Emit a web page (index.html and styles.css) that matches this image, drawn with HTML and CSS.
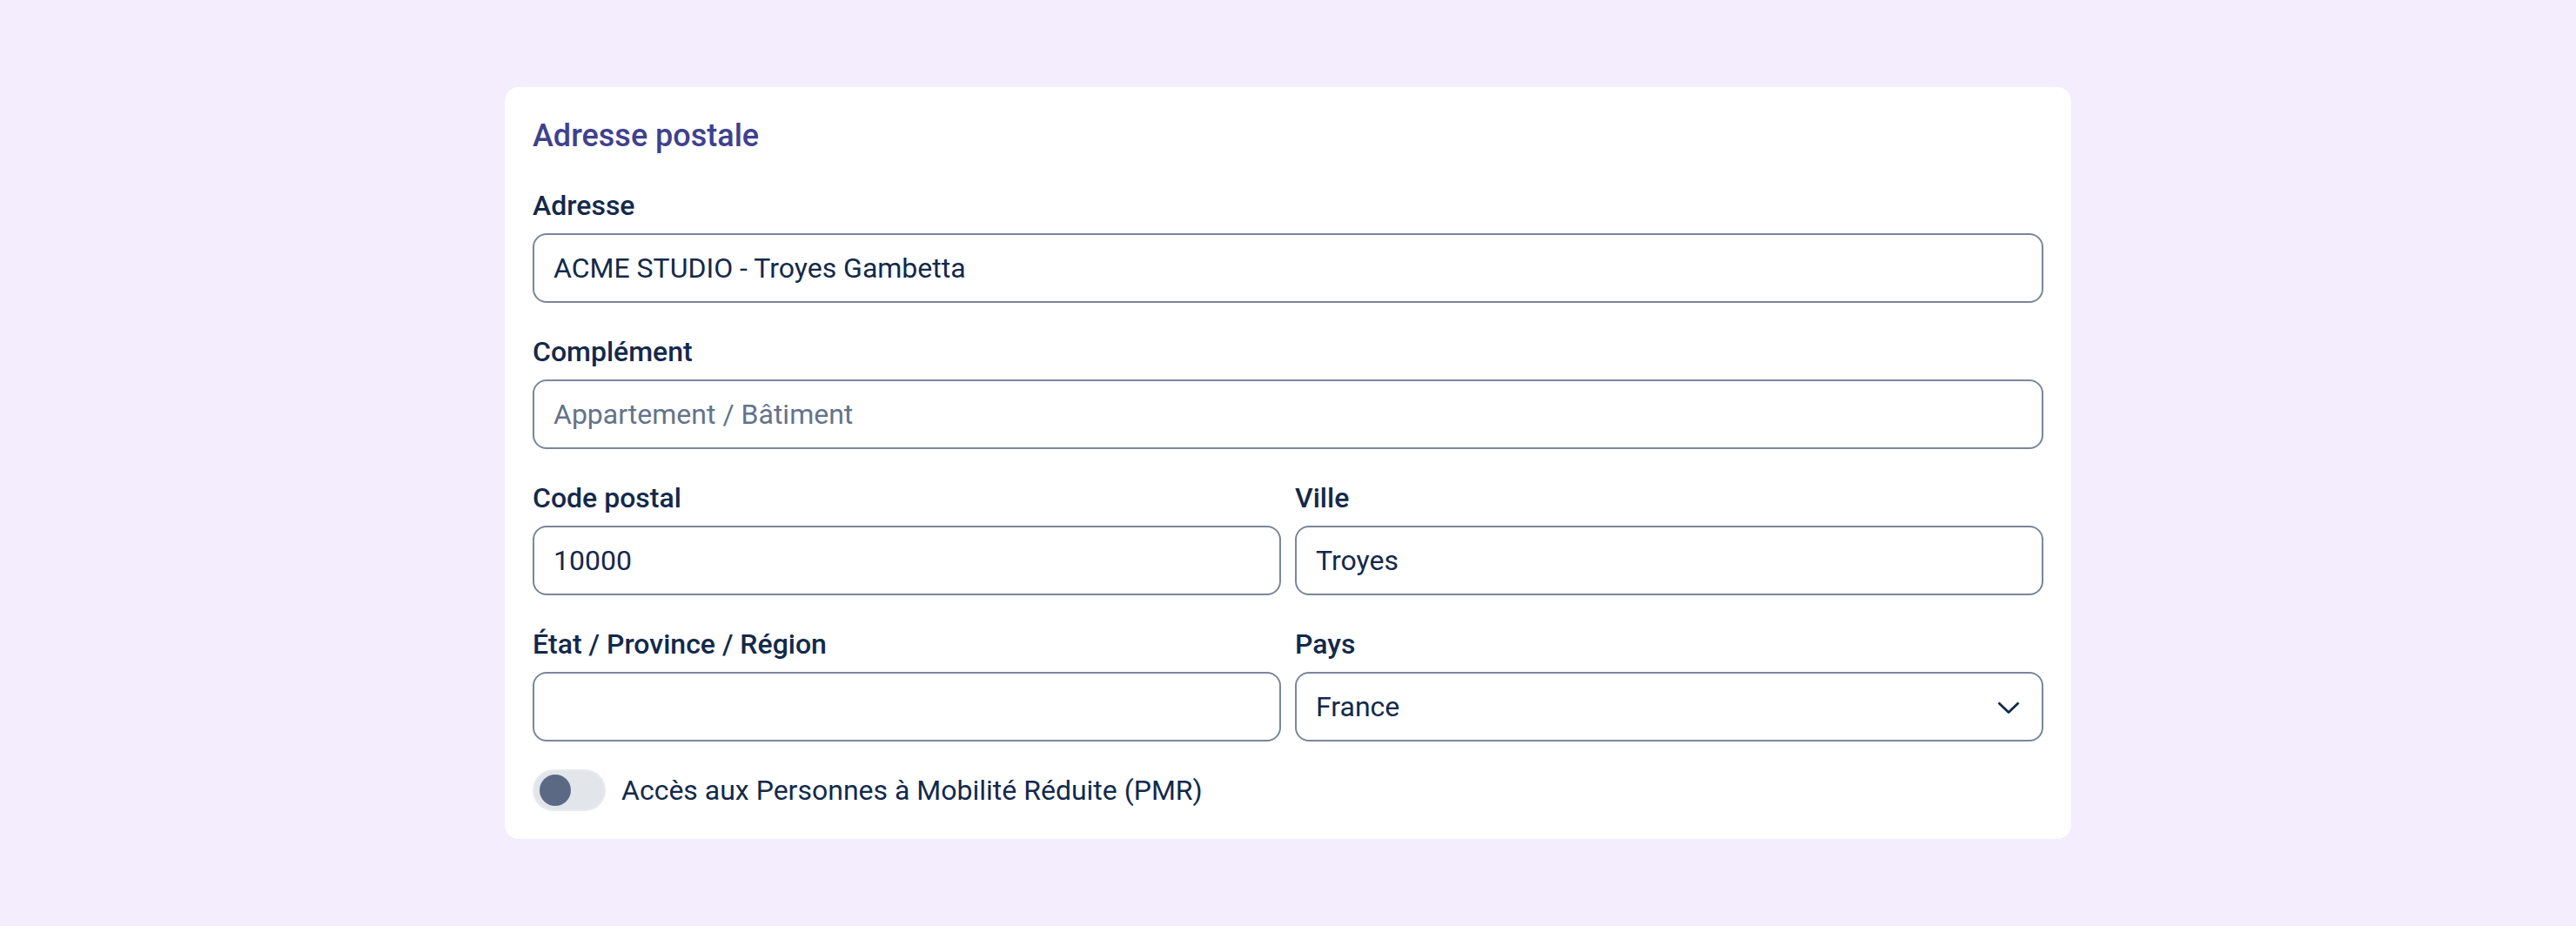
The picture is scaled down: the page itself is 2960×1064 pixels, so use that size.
FILE: index.html
```html
<!DOCTYPE html>
<html lang="fr">
<head>
<meta charset="utf-8">
<title>Adresse postale</title>
<link rel="stylesheet" href="styles.css">
</head>
<body>
<main class="page">
  <section class="card">
    <h2 class="card-title">Adresse postale</h2>
    <div class="fields">
      <div class="field">
        <label class="label" for="adresse">Adresse</label>
        <input class="input" id="adresse" type="text" value="ACME STUDIO - Troyes Gambetta">
      </div>
      <div class="field">
        <label class="label" for="complement">Complément</label>
        <input class="input" id="complement" type="text" placeholder="Appartement / Bâtiment">
      </div>
      <div class="row">
        <div class="field">
          <label class="label" for="cp">Code postal</label>
          <input class="input" id="cp" type="text" value="10000">
        </div>
        <div class="field">
          <label class="label" for="ville">Ville</label>
          <input class="input" id="ville" type="text" value="Troyes">
        </div>
      </div>
      <div class="row">
        <div class="field">
          <label class="label" for="etat">État / Province / Région</label>
          <input class="input" id="etat" type="text">
        </div>
        <div class="field">
          <label class="label" for="pays">Pays</label>
          <div class="select-wrap">
            <select class="input select" id="pays">
              <option>France</option>
            </select>
            <svg class="chevron" width="28" height="16" viewBox="0 0 28 16" aria-hidden="true">
              <path d="M2.5 2.5 L14 13.5 L25.5 2.5" fill="none" stroke="#13294b" stroke-width="2.8" stroke-linejoin="round"/>
            </svg>
          </div>
        </div>
      </div>
      <div class="toggle-row">
        <span class="toggle"><span class="knob"></span></span>
        <span class="toggle-label">Accès aux Personnes à Mobilité Réduite (PMR)</span>
      </div>
    </div>
  </section>
</main>
</body>
</html>
```

FILE: styles.css
```css
* { box-sizing: border-box; }

html, body {
  margin: 0;
  padding: 0;
}

body {
  background: #f4edfd;
  font-family: Roboto, "Liberation Sans", Arial, sans-serif;
  color: #13294b;
}

.page {
  min-height: 100vh;
  display: flex;
  align-items: center;
  justify-content: center;
}

.card {
  width: 1800px;
  background: #ffffff;
  border-radius: 16px;
  padding: 32px;
}

.card-title {
  margin: 0 0 32px 0;
  font-size: 36px;
  line-height: 48px;
  font-weight: 500;
  color: #3f418d;
}

.fields {
  display: flex;
  flex-direction: column;
  gap: 32px;
}

.row {
  display: grid;
  grid-template-columns: 1fr 1fr;
  gap: 16px;
}

.field {
  display: flex;
  flex-direction: column;
  min-width: 0;
}

.label {
  font-size: 32px;
  line-height: 48px;
  font-weight: 500;
  color: #13294b;
  margin-bottom: 8px;
}

.input {
  display: block;
  width: 100%;
  height: 80px;
  margin: 0;
  border: 2px solid #7a869b;
  border-radius: 16px;
  padding: 0 22px;
  background: #ffffff;
  font-family: Roboto, "Liberation Sans", Arial, sans-serif;
  font-size: 32px;
  font-weight: 400;
  color: #13294b;
  outline: none;
}

.input::placeholder {
  color: #64738b;
  opacity: 1;
}

.select-wrap {
  position: relative;
}

.select {
  appearance: none;
  -webkit-appearance: none;
  padding-right: 70px;
}

.chevron {
  position: absolute;
  right: 26px;
  top: 33px;
  pointer-events: none;
}

.toggle-row {
  display: flex;
  align-items: center;
  gap: 18px;
  height: 48px;
}

.toggle {
  display: flex;
  align-items: center;
  width: 84px;
  height: 48px;
  border-radius: 24px;
  background: #e2e5ea;
  border: 2px solid #e8eaee;
  padding-left: 6px;
  flex: none;
}

.knob {
  width: 36px;
  height: 36px;
  border-radius: 50%;
  background: #5b6985;
}

.toggle-label {
  font-size: 32px;
  line-height: 48px;
  color: #13294b;
}
```
